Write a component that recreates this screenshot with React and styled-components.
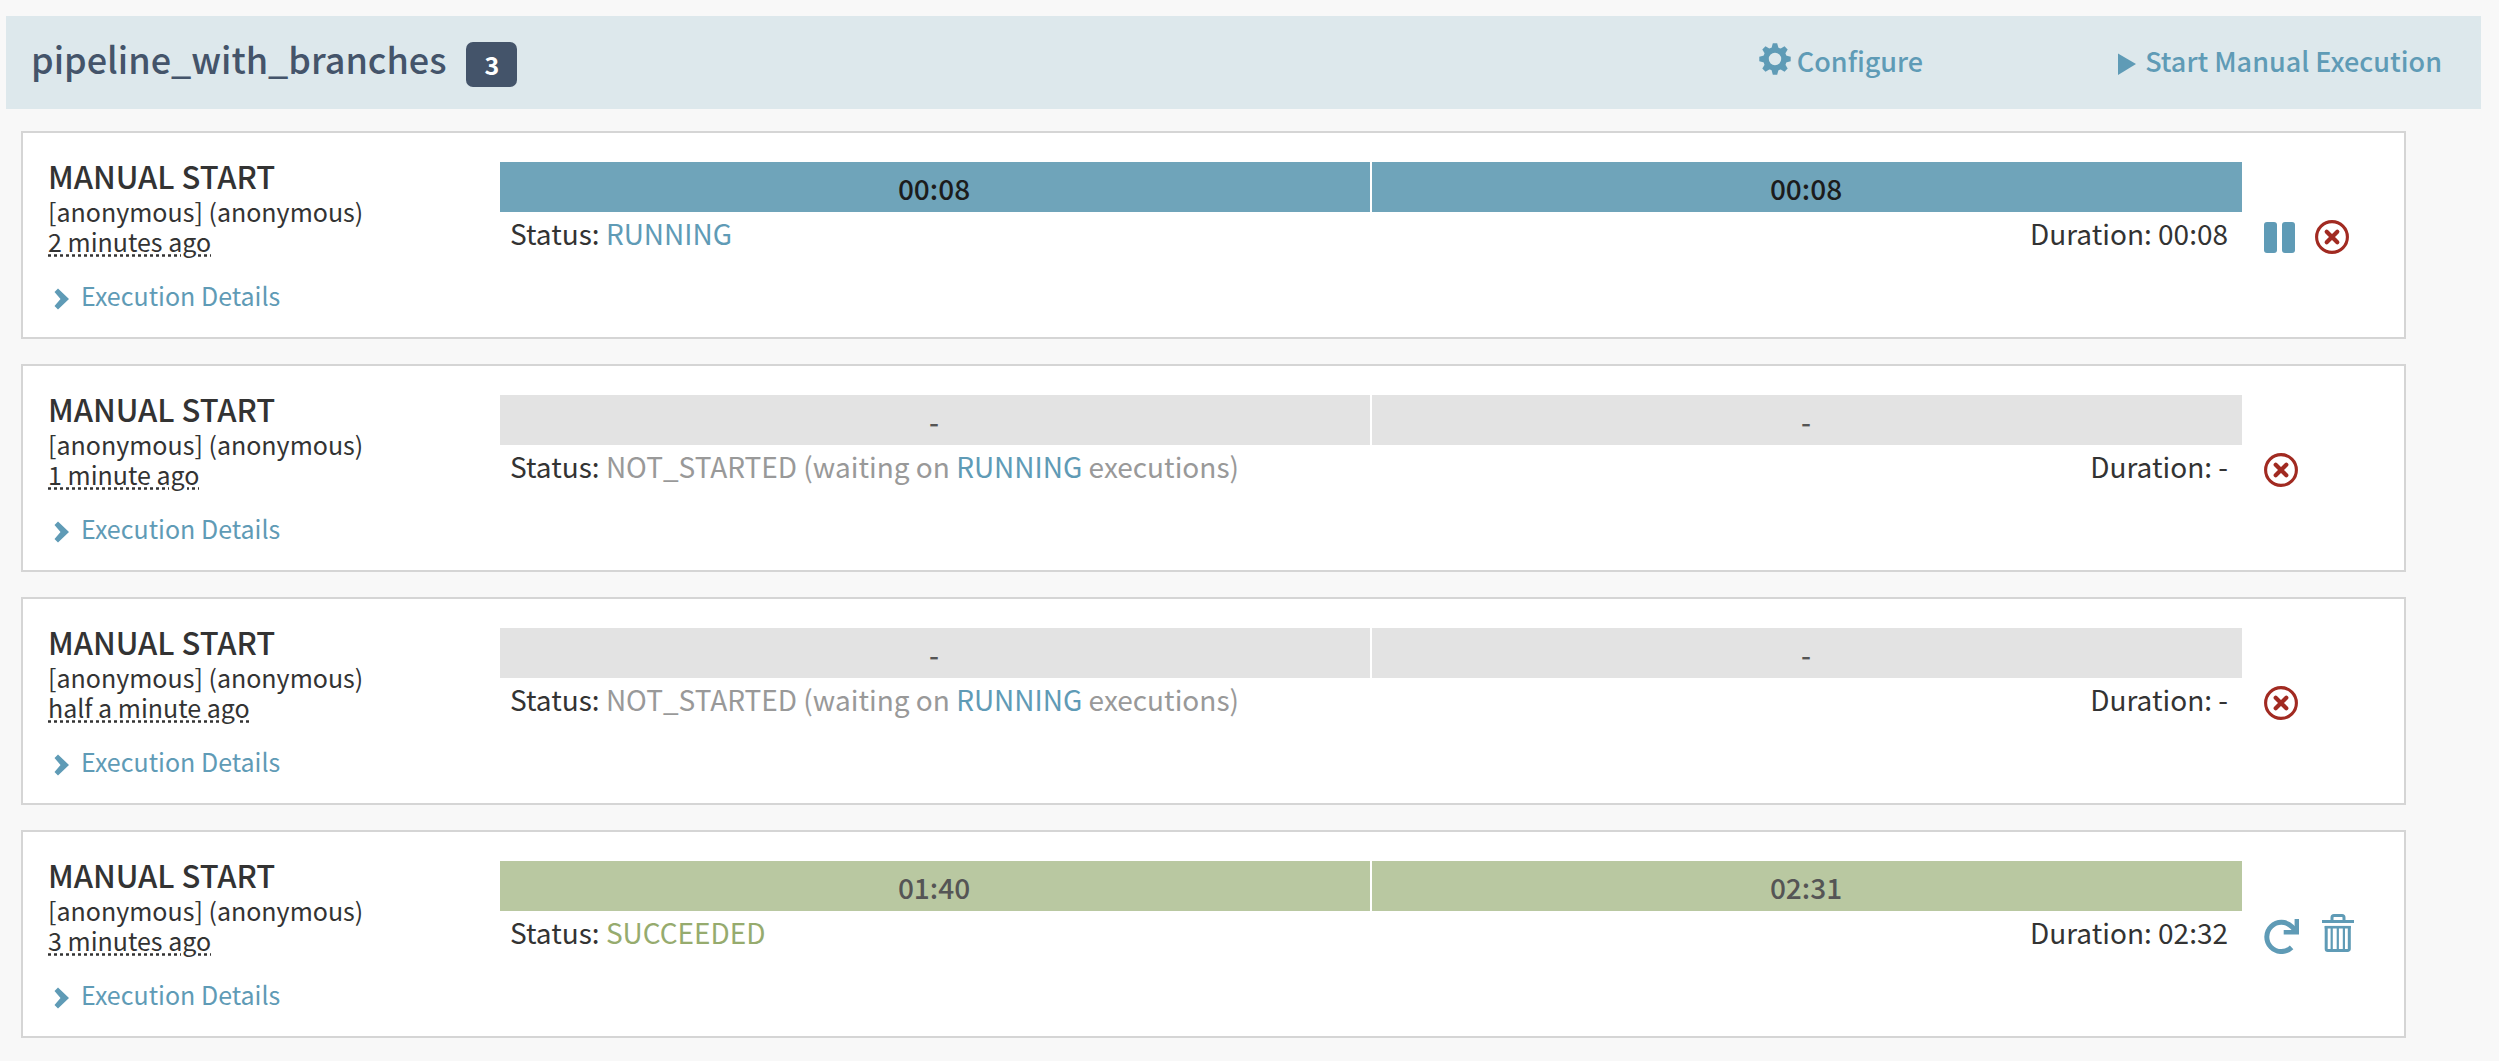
import React from "react";
import styled, { createGlobalStyle } from "styled-components";

const BLUE = "#5f9bb6";

const Global = createGlobalStyle`
  * { box-sizing: border-box; }
  body {
    margin: 0;
    background: #f8f8f8;
    color: #333;
    font-family: "Noto Sans CJK SC", "Noto Sans", sans-serif;
    font-size: 28px;
    line-height: 30px;
  }
`;

const Page = styled.main`
  padding: 16px 18px 23px 6px;
`;

const Header = styled.header`
  display: flex;
  align-items: center;
  height: 93px;
  padding: 0 39px 0 25px;
  background: #dde8ec;
`;

const Title = styled.h1`
  margin: 0;
  padding-bottom: 10px;
  font-size: 36px;
  line-height: 48px;
  font-weight: 500;
  color: #44546a;
`;

const Count = styled.span`
  margin: 4px 0 0 20px;
  width: 51px;
  border-radius: 7px;
  background: #44546a;
  color: #fff;
  font-size: 25px;
  line-height: 45px;
  font-weight: 700;
  text-align: center;
`;

const HeaderActions = styled.div`
  display: flex;
  gap: 195px;
  margin-left: auto;
  padding-bottom: 3px;
`;

const HeaderButton = styled.button`
  display: flex;
  align-items: center;
  gap: ${(p) => p.$gap}px;
  padding: 0;
  border: 0;
  background: none;
  color: ${BLUE};
  font: inherit;
  font-size: 27px;
  font-weight: 500;
  cursor: pointer;
`;

const List = styled.div`
  display: grid;
  gap: 25px;
  padding: 22px 75px 0 15px;
`;

const Card = styled.article`
  display: grid;
  grid-template-columns: 450px 1fr 137px;
  padding: 29px 25px 27px;
  border: 2px solid #d5d5d5;
  background: #fff;
`;

const Meta = styled.div`
  display: flex;
  flex-direction: column;
  align-items: flex-start;
  font-size: 25px;
`;

const Trigger = styled.h2`
  margin: 0 0 6px;
  font-size: 31px;
  line-height: 28px;
  font-weight: 500;
`;

const Time = styled.abbr`
  text-decoration: underline dotted;
`;

const DetailsButton = styled.button`
  display: flex;
  align-items: flex-end;
  gap: 12px;
  margin-top: 24px;
  padding: 0 0 0 6px;
  border: 0;
  background: none;
  color: ${BLUE};
  font: inherit;
  cursor: pointer;
`;

const Stages = styled.div`
  display: grid;
  grid-template-columns: 1fr 1fr;
`;

const Stage = styled.div`
  height: 50px;
  background: ${(p) => p.$bg};
  box-shadow: inset 2px 0 #fff;
  color: ${(p) => p.$fg};
  line-height: 52px;
  font-weight: 500;
  text-align: center;
`;

const StatusRow = styled.div`
  display: flex;
  justify-content: space-between;
  padding: 6px 14px 0 12px;
`;

const Tint = styled.span`
  color: ${(p) => p.$color};
`;

const Actions = styled.div`
  display: flex;
  align-items: center;
  align-self: start;
  gap: 20px;
  height: 40px;
  margin: 55px 0 0 22px;
`;

const IconButton = styled.button`
  display: flex;
  padding: 0;
  border: 0;
  background: none;
  color: ${(p) => p.$color || BLUE};
  cursor: pointer;
`;

const GearIcon = () => (
  <svg width="32" height="37" viewBox="0 0 32 37" fill="none" stroke="currentColor" aria-hidden="true">
    <circle cx="16" cy="16" r="9" strokeWidth="5.6" />
    {[0, 45, 90, 135, 180, 225, 270, 315].map((a) => (
      <path key={a} d="M12.3 6 13.8.3h4.4L19.700 6z" fill="currentColor" stroke="none" transform={`rotate(${a} 16 16)`} />
    ))}
  </svg>
);

const PlayIcon = () => (
  <svg width="18" height="27" viewBox="0 0 18 27" fill="currentColor" aria-hidden="true">
    <path d="M0 5.500 18 16 0 27z" />
  </svg>
);

const ChevronIcon = () => (
  <svg width="15" height="22" viewBox="0 0 15 22" fill="currentColor" aria-hidden="true">
    <path d="M4 .5 15 11 4 21.500.5 18 6.500 11 .5 4z" />
  </svg>
);

const PauseIcon = () => (
  <svg width="31" height="31" viewBox="0 0 31 31" fill="currentColor" aria-hidden="true">
    <rect width="13" height="31" rx="3" />
    <rect x="18" width="13" height="31" rx="3" />
  </svg>
);

const CancelIcon = () => (
  <svg width="34" height="34" viewBox="0 0 34 34" fill="none" stroke="currentColor" aria-hidden="true">
    <circle cx="17" cy="17" r="15.4" strokeWidth="3.1" />
    <path d="m11.700 11.700 10.600 10.600m0-10.600-10.600 10.600" strokeWidth="4.200" strokeLinecap="round" />
  </svg>
);

const RetryIcon = () => (
  <svg width="35" height="35" viewBox="0 0 35 35" fill="none" stroke="currentColor" aria-hidden="true">
    <path d="M27.600 28.400A14.600 14.600 0 1 1 27.900 7.800L32.500 12.500" strokeWidth="5" />
    <path d="M32.800 0v13.200H19.700" strokeWidth="4.400" />
  </svg>
);

const TrashIcon = () => (
  <svg width="35" height="44" viewBox="-3 0 35 44" fill="none" stroke="currentColor" aria-hidden="true">
    <path d="M0 7.500h32" strokeWidth="3" />
    <path d="M10 7V3.500a2 2 0 0 1 2-2h8a2 2 0 0 1 2 2V7" strokeWidth="3" />
    <path d="M4.200 12v23a1.500 1.500 0 0 0 1.500 1.500h20.100a1.500 1.500 0 0 0 1.500-1.500V12" strokeWidth="3" />
    <path d="M2.700 13.200h26.100" strokeWidth="2.600" />
    <path d="M9.700 13v22M15.800 13v22M21.900 13v22" strokeWidth="2.200" />
  </svg>
);

const NotStarted = () => (
  <Tint $color="#999">
    NOT_STARTED (waiting on <Tint $color={BLUE}>RUNNING</Tint> executions)
  </Tint>
);

const Cancel = () => (
  <IconButton type="button" aria-label="Cancel execution" $color="#a12a21">
    <CancelIcon />
  </IconButton>
);

const executions = [
  {
    time: "2 minutes ago",
    stages: ["00:08", "00:08"],
    bg: "#6fa4ba",
    fg: "#1c1c1c",
    status: <Tint $color={BLUE}>RUNNING</Tint>,
    duration: "00:08",
    actions: (
      <>
        <IconButton type="button" aria-label="Pause execution">
          <PauseIcon />
        </IconButton>
        <Cancel />
      </>
    ),
  },
  { time: "1 minute ago", stages: ["-", "-"], bg: "#e3e3e3", fg: "#555", status: <NotStarted />, duration: "-", actions: <Cancel /> },
  { time: "half a minute ago", stages: ["-", "-"], bg: "#e3e3e3", fg: "#555", status: <NotStarted />, duration: "-", actions: <Cancel /> },
  {
    time: "3 minutes ago",
    stages: ["01:40", "02:31"],
    bg: "#b9c8a1",
    fg: "#555",
    status: <Tint $color="#96ab6e">SUCCEEDED</Tint>,
    duration: "02:32",
    actions: (
      <>
        <IconButton type="button" aria-label="Restart execution">
          <RetryIcon />
        </IconButton>
        <IconButton type="button" aria-label="Delete execution">
          <TrashIcon />
        </IconButton>
      </>
    ),
  },
];

export default function App() {
  return (
    <Page>
      <Global />
      <Header>
        <Title>pipeline_with_branches</Title>
        <Count>3</Count>
        <HeaderActions>
          <HeaderButton type="button" $gap={6}>
            <GearIcon />
            Configure
          </HeaderButton>
          <HeaderButton type="button" $gap={9}>
            <PlayIcon />
            Start Manual Execution
          </HeaderButton>
        </HeaderActions>
      </Header>
      <List>
        {executions.map((e) => (
          <Card key={e.time}>
            <Meta>
              <Trigger>MANUAL START</Trigger>
              <span>[anonymous] (anonymous)</span>
              <Time>{e.time}</Time>
              <DetailsButton type="button">
                <ChevronIcon />
                Execution Details
              </DetailsButton>
            </Meta>
            <div>
              <Stages>
                {e.stages.map((s, i) => (
                  <Stage key={i} $bg={e.bg} $fg={e.fg}>
                    {s}
                  </Stage>
                ))}
              </Stages>
              <StatusRow>
                <span>Status: {e.status}</span>
                <span>Duration: {e.duration}</span>
              </StatusRow>
            </div>
            <Actions>{e.actions}</Actions>
          </Card>
        ))}
      </List>
    </Page>
  );
}
